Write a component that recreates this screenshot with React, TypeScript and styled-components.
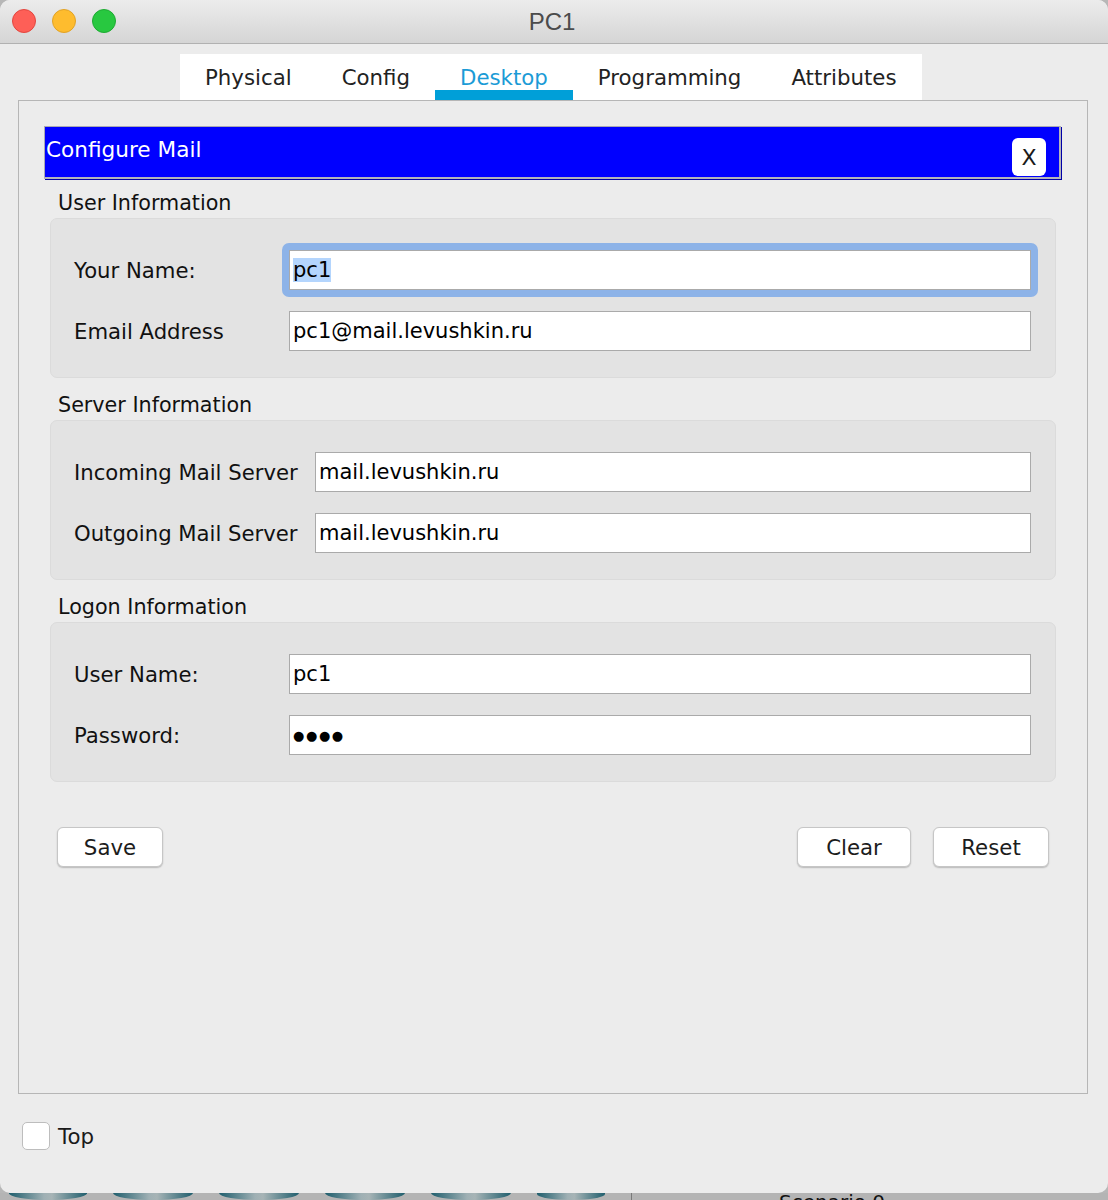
import React from "react";
import styled, { createGlobalStyle } from "styled-components";

const Global = createGlobalStyle`
  html, body { margin: 0; padding: 0; background: #b7b7b7; }
  body { font-family: "DejaVu Sans", "Noto Sans", sans-serif; }
  * { box-sizing: border-box; }
`;

const Window = styled.div`
  width: 1108px;
  height: 1193px;
  background: #ececec;
  border-radius: 10px;
  overflow: hidden;
  display: flex;
  flex-direction: column;
`;

const TitleBar = styled.div`
  height: 44px;
  border-bottom: 1px solid #b1b1b1;
  background: linear-gradient(#ececec, #d5d5d5);
  display: grid;
  grid-template-columns: 1fr auto 1fr;
  align-items: center;
`;

const Lights = styled.div`
  display: flex;
  gap: 16px;
  padding-left: 12px;
  margin-top: -1px;
`;

const Light = styled.span<{ $bg: string; $bd: string }>`
  width: 24px;
  height: 24px;
  border-radius: 50%;
  background: ${(p) => p.$bg};
  border: 1px solid ${(p) => p.$bd};
`;

const Title = styled.div`
  font-family: "Liberation Sans", Arial, sans-serif;
  font-size: 24px;
  color: #4b4b4b;
  margin-top: 0px;
  padding-right: 4px;
`;

const TabRow = styled.div`
  display: flex;
  padding: 10px 0 0 180px;
`;

const TabStrip = styled.div`
  display: flex;
  height: 46px;
  background: #ffffff;
`;

const Tab = styled.div<{ $active?: boolean }>`
  position: relative;
  display: flex;
  align-items: center;
  padding: 0 25px;
  font-size: 21.3px;
  padding-top: 1px;
  color: ${(p) => (p.$active ? "#1b9bd6" : "#222222")};
  &::after {
    content: "";
    display: ${(p) => (p.$active ? "block" : "none")};
    position: absolute;
    left: 0;
    right: 0;
    bottom: 0;
    height: 10px;
    background: #009fd8;
  }
`;

const Panel = styled.div`
  margin: 0 20px 0 18px;
  height: 994px;
  border: 1px solid #b6b6b6;
  padding: 25px 26px 0 25px;
  display: flex;
  flex-direction: column;
`;

const Header = styled.div`
  height: 53px;
  background: #0000ff;
  border-top: 1px solid #a9a9b4;
  border-left: 1px solid #a9a9b4;
  border-right: 2px solid #b4b4bc;
  border-bottom: 2px solid #b4b4bc;
  box-shadow: 1px 1px 0 #0000a8;
  display: flex;
  align-items: flex-start;
  padding-right: 13px;
`;

const HeaderTitle = styled.div`
  margin-top: 11px;
  padding-left: 1px;
  line-height: 24px;
  font-size: 21.6px;
  color: #ffffff;
`;

const CloseBtn = styled.div`
  margin-left: auto;
  margin-top: 11px;
  width: 34px;
  height: 38px;
  background: #ffffff;
  border-radius: 6px;
  display: flex;
  align-items: center;
  justify-content: center;
  font-size: 22px;
  color: #1a1a1a;
`;

const Form = styled.div`
  padding: 0 5px 0 6px;
  display: flex;
  flex-direction: column;
`;

const SectionLabel = styled.div<{ $top: number }>`
  margin-top: ${(p) => p.$top}px;
  padding-left: 8px;
  line-height: 24px;
  font-size: 20.7px;
  color: #111111;
`;

const Group = styled.div<{ $label: number }>`
  margin-top: 3px;
  height: 160px;
  background: #e3e3e3;
  border: 1px solid #dbdbdb;
  border-radius: 7px;
  padding: 31px 24px 0 23px;
  display: grid;
  grid-template-columns: ${(p) => p.$label}px 1fr;
  grid-auto-rows: 40px;
  row-gap: 21px;
  align-content: start;
`;

const FieldLabel = styled.div`
  align-self: center;
  font-size: 21.2px;
  color: #111111;
`;

const Field = styled.div`
  height: 40px;
  background: #ffffff;
  border: 1px solid #aaaaaa;
  padding-left: 3px;
  display: flex;
  align-items: center;
  font-size: 21px;
  color: #000000;
  white-space: nowrap;
`;

const FocusRing = styled.div`
  margin: -7px;
  padding: 7px;
  background: #8db3e8;
  border-radius: 7px;
`;

const Selected = styled.span`
  background: #b4d5fd;
`;

const Dots = styled.span`
  font-size: 13px;
  letter-spacing: 1.6px;
  padding-top: 1px;
`;

const ButtonRow = styled.div`
  margin-top: 45px;
  display: flex;
  gap: 22px;
  padding: 0 7px;
`;

const Button = styled.div<{ $w: number; $push?: boolean }>`
  width: ${(p) => p.$w}px;
  height: 40px;
  margin-left: ${(p) => (p.$push ? "auto" : "0")};
  background: #ffffff;
  border: 1px solid #c6c6c6;
  border-radius: 6px;
  box-shadow: 0 1px 1.5px rgba(0, 0, 0, 0.22);
  display: flex;
  align-items: center;
  justify-content: center;
  font-size: 21.3px;
  color: #1c1c1c;
`;

const BottomRow = styled.div`
  margin-top: 28px;
  padding-left: 22px;
  display: flex;
  align-items: center;
  gap: 8px;
`;

const Checkbox = styled.div`
  width: 28px;
  height: 28px;
  background: #ffffff;
  border: 1px solid #bdbdbd;
  border-radius: 5px;
`;

const CheckLabel = styled.div`
  font-size: 21.3px;
  color: #1a1a1a;
`;

const Strip = styled.div`
  height: 7px;
  display: flex;
  align-items: flex-start;
  padding-left: 9px;
  gap: 26px;
  overflow: hidden;
  background: #b4b4b4;
`;

const Bulb = styled.div<{ $w: number }>`
  width: ${(p) => p.$w}px;
  height: 7px;
  border-radius: 0 0 40px 40px / 0 0 7px 7px;
  background: linear-gradient(90deg, #1f5e6d, #9fb0b4 45%, #a7b4b6 55%, #1f5e6d);
`;

const Divider = styled.div`
  width: 1px;
  height: 7px;
  background: #7a7a7a;
`;

const ScenarioText = styled.div`
  font-size: 20px;
  line-height: 7px;
  padding-top: 6px;
  margin-left: 121px;
  color: #111;
  white-space: nowrap;
`;

export default function App() {
  return (
    <>
      <Global />
      <Window>
        <TitleBar>
          <Lights>
            <Light $bg="#fe5f57" $bd="#e2463f" />
            <Light $bg="#febc2e" $bd="#e0a226" />
            <Light $bg="#28c840" $bd="#1eaa32" />
          </Lights>
          <Title>PC1</Title>
          <div />
        </TitleBar>
        <TabRow>
          <TabStrip>
            <Tab>Physical</Tab>
            <Tab>Config</Tab>
            <Tab $active>Desktop</Tab>
            <Tab>Programming</Tab>
            <Tab>Attributes</Tab>
          </TabStrip>
        </TabRow>
        <Panel>
          <Header>
            <HeaderTitle>Configure Mail</HeaderTitle>
            <CloseBtn>X</CloseBtn>
          </Header>
          <Form>
            <SectionLabel $top={12}>User Information</SectionLabel>
            <Group $label={215}>
              <FieldLabel>Your Name:</FieldLabel>
              <FocusRing>
                <Field>
                  <Selected>pc1</Selected>
                </Field>
              </FocusRing>
              <FieldLabel>Email Address</FieldLabel>
              <Field>pc1@mail.levushkin.ru</Field>
            </Group>
            <SectionLabel $top={15}>Server Information</SectionLabel>
            <Group $label={241}>
              <FieldLabel>Incoming Mail Server</FieldLabel>
              <Field>mail.levushkin.ru</Field>
              <FieldLabel>Outgoing Mail Server</FieldLabel>
              <Field>mail.levushkin.ru</Field>
            </Group>
            <SectionLabel $top={15}>Logon Information</SectionLabel>
            <Group $label={215}>
              <FieldLabel>User Name:</FieldLabel>
              <Field>pc1</Field>
              <FieldLabel>Password:</FieldLabel>
              <Field>
                <Dots>●●●●</Dots>
              </Field>
            </Group>
            <ButtonRow>
              <Button $w={106}>Save</Button>
              <Button $w={114} $push>
                Clear
              </Button>
              <Button $w={116}>Reset</Button>
            </ButtonRow>
          </Form>
        </Panel>
        <BottomRow>
          <Checkbox />
          <CheckLabel>Top</CheckLabel>
        </BottomRow>
      </Window>
      <Strip>
        <Bulb $w={78} />
        <Bulb $w={80} />
        <Bulb $w={80} />
        <Bulb $w={80} />
        <Bulb $w={80} />
        <Bulb $w={68} />
        <Divider />
        <ScenarioText>Scenario 0</ScenarioText>
      </Strip>
    </>
  );
}
